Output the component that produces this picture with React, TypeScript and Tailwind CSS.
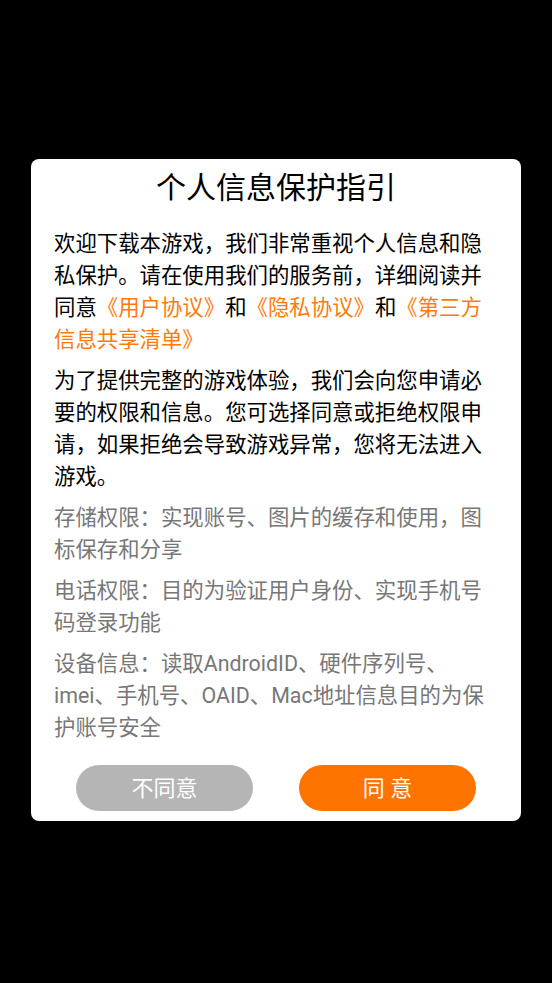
const FONT = "font-['Roboto','Noto_Sans_CJK_SC',sans-serif]";

const GRAY_ITEMS = [
  "存储权限：实现账号、图片的缓存和使用，图标保存和分享",
  "电话权限：目的为验证用户身份、实现手机号码登录功能",
  "设备信息：读取AndroidID、硬件序列号、imei、手机号、OAID、Mac地址信息目的为保护账号安全",
];

export default function App() {
  return (
    <div className={`${FONT} min-h-[983px] w-full bg-black pt-[159px]`}>
      <div className="mx-[31px] rounded-[8px] bg-white pt-[8px] pb-[10px]">
        <h1 className="text-center text-[30px] leading-[42px] font-normal text-black">
          个人信息保护指引
        </h1>

        <div className="mt-[19px] flex flex-col gap-[9px] px-[23px] text-[21.4px] leading-[32px]">
          <p className="text-black">
            欢迎下载本游戏，我们非常重视个人信息和隐私保护。请在使用我们的服务前，详细阅读并同意
            <span className="text-[#ff7a0a]">《用户协议》</span>和
            <span className="text-[#ff7a0a]">《隐私协议》</span>和
            <span className="text-[#ff7a0a]">《第三方信息共享清单》</span>
          </p>
          <p className="text-black">
            为了提供完整的游戏体验，我们会向您申请必要的权限和信息。您可选择同意或拒绝权限申请，如果拒绝会导致游戏异常，您将无法进入游戏。
          </p>
          {GRAY_ITEMS.map((t) => (
            <p key={t} className="text-[#777777]">
              {t}
            </p>
          ))}
        </div>

        <div className="mt-[21px] flex justify-between px-[45px]">
          <button className="h-[46px] w-[177px] rounded-full bg-[#b5b5b5] text-[22px] text-white">
            不同意
          </button>
          <button className="h-[46px] w-[177px] rounded-full bg-[#ff7300] text-[22px] text-white">
            同 意
          </button>
        </div>
      </div>
    </div>
  );
}
